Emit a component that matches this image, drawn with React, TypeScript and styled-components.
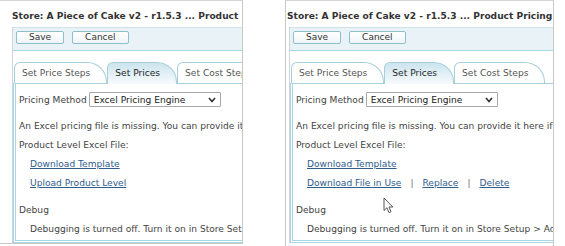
import styled, { createGlobalStyle } from "styled-components";

const GlobalStyle = createGlobalStyle`
  html, body {
    margin: 0;
    padding: 0;
    background: #fff;
  }
  body {
    font-family: "DejaVu Sans", Verdana, sans-serif;
  }
`

const Page = styled.div`
  display: flex;
  align-items: flex-start;
  gap: 42px;
  width: 565px;
  height: 246px;
  overflow: hidden;
`

const Shot = styled.div<{ $width: number; $open?: boolean }>`
  position: relative;
  flex: none;
  width: ${p => p.$width}px;
  box-sizing: border-box;
  overflow: hidden;
  border-top: 1px solid #d4d4d4;
  border-right: 1px solid #c8c8c8;
  border-left: ${p => (p.$open ? "1px solid #c8c8c8" : "none")};
  border-bottom: ${p => (p.$open ? "none" : "1px solid #c8c8c8")};
  align-self: ${p => (p.$open ? "stretch" : "flex-start")};
`

const Title = styled.div<{ $inset: number }>`
  padding: 7px 0 2px ${p => p.$inset}px;
  line-height: 17px;
  font-size: 9.1px;
  font-weight: bold;
  color: #333;
  white-space: nowrap;
`

const Window = styled.div<{ $inset: number }>`
  margin-left: ${p => p.$inset}px;
  width: 330px;
  border-left: 1px solid #cfd5d8;
`

const Toolbar = styled.div`
  display: flex;
  align-items: flex-start;
  gap: 8px;
  height: 24px;
  box-sizing: border-box;
  padding: 3px 3px 0;
  background: #e8f2f7;
  border-top: 1px solid #cfe1e9;
  border-bottom: 1px solid #a6d8e5;
`

const Button = styled.button`
  height: 13px;
  box-sizing: border-box;
  padding: 0 12px;
  border: 1px solid #8fbfcb;
  border-radius: 2px;
  background: linear-gradient(#ffffff, #eef5f8);
  font-family: inherit;
  font-size: 9px;
  line-height: 11px;
  color: #333;
`

const TabStrip = styled.div`
  position: relative;
  z-index: 1;
  display: flex;
  align-items: flex-end;
  margin-top: 11px;
  padding-left: 1px;
`

const Tab = styled.div<{ $active?: boolean }>`
  height: ${p => (p.$active ? 22 : 21)}px;
  margin-bottom: ${p => (p.$active ? -1 : 0)}px;
  box-sizing: border-box;
  padding: 0 16px 0 7px;
  border: 1px solid #a7cfdb;
  border-bottom: none;
  border-radius: 6px 20px 0 0 / 6px 20px 0 0;
  background: ${p => (p.$active ? "linear-gradient(#cce4ee, #f7fbfd)" : "#fff")};
  line-height: 20px;
  font-size: 9.1px;
  color: ${p => (p.$active ? "#1f1f1f" : "#555")};
  white-space: nowrap;
`

const Panel = styled.div`
  border: 3px double #a8d8e5;
  border-top: 1px solid #a8d0dc;
  padding: 8px 0 1px 3px;
  font-size: 9.1px;
  color: #444;
  white-space: nowrap;
`

const MethodRow = styled.div`
  display: flex;
  align-items: center;
  gap: 2px;
  height: 15px;
`

const Select = styled.div`
  display: flex;
  align-items: center;
  justify-content: space-between;
  width: 132px;
  height: 15px;
  box-sizing: border-box;
  padding: 0 4px 0 4px;
  border: 1px solid #a8a8a8;
  border-radius: 1px;
  color: #222;
`

const Line = styled.div<{ $indent?: boolean; $gap?: number }>`
  line-height: 19px;
  padding-left: ${p => (p.$indent ? 11 : 0)}px;
  margin-top: ${p => p.$gap ?? 0}px;
`

const Link = styled.a`
  color: #2f5d8c;
  text-decoration: underline;
  text-underline-offset: 1px;
  cursor: pointer;
`

const Sep = styled.span`
  margin: 0 9px;
  color: #6a6a6a;
`

const Pointer = styled.svg`
  position: absolute;
  left: 97px;
  top: 196px;
`

const Chevron = () => (
  <svg width="8" height="6" viewBox="0 0 8 6">
    <polyline points="1,1 4,4.5 7,1" fill="none" stroke="#333" strokeWidth="1.6" />
  </svg>
)

interface IShotInfo {
  width: number
  open?: boolean
  titleInset: number
  windowInset: number
  fileInUse: boolean
}

const shots: IShotInfo[] = [
  { width: 243, titleInset: 12, windowInset: 12, fileInUse: false },
  { width: 269, open: true, titleInset: 1, windowInset: 3, fileInUse: true },
]

export default function App() {
  return (
    <>
      <GlobalStyle />
      <Page>
        {shots.map((shot, index) => (
          <Shot key={index} $width={shot.width} $open={shot.open}>
            <Title $inset={shot.titleInset}>Store: A Piece of Cake v2 - r1.5.3 ... Product Pricing</Title>
            <Window $inset={shot.windowInset}>
              <Toolbar>
                <Button>Save</Button>
                <Button>Cancel</Button>
              </Toolbar>
              <TabStrip>
                <Tab>Set Price Steps</Tab>
                <Tab $active>Set Prices</Tab>
                <Tab>Set Cost Steps</Tab>
              </TabStrip>
              <Panel>
                <MethodRow>
                  <span>Pricing Method</span>
                  <Select>
                    <span>Excel Pricing Engine</span>
                    <Chevron />
                  </Select>
                </MethodRow>
                <Line $gap={10}>An Excel pricing file is missing. You can provide it here if you want.</Line>
                <Line>Product Level Excel File:</Line>
                <Line $indent><Link>Download Template</Link></Line>
                {shot.fileInUse ? (
                  <Line $indent>
                    <Link>Download File in Use</Link>
                    <Sep>|</Sep>
                    <Link>Replace</Link>
                    <Sep>|</Sep>
                    <Link>Delete</Link>
                  </Line>
                ) : (
                  <Line $indent><Link>Upload Product Level</Link></Line>
                )}
                <Line $gap={8}>Debug</Line>
                <Line $indent>Debugging is turned off. Turn it on in Store Setup &gt; Advanced.</Line>
              </Panel>
            </Window>
            {shot.fileInUse && (
              <Pointer width="11" height="17" viewBox="0 0 11 17">
                <path d="M1 1 L1 13.5 L3.9 10.8 L6 15.6 L8 14.7 L6 10 L9.8 10 Z" fill="#fff" stroke="#555" strokeWidth="1" strokeLinejoin="round" />
              </Pointer>
            )}
          </Shot>
        ))}
      </Page>
    </>
  )
}
